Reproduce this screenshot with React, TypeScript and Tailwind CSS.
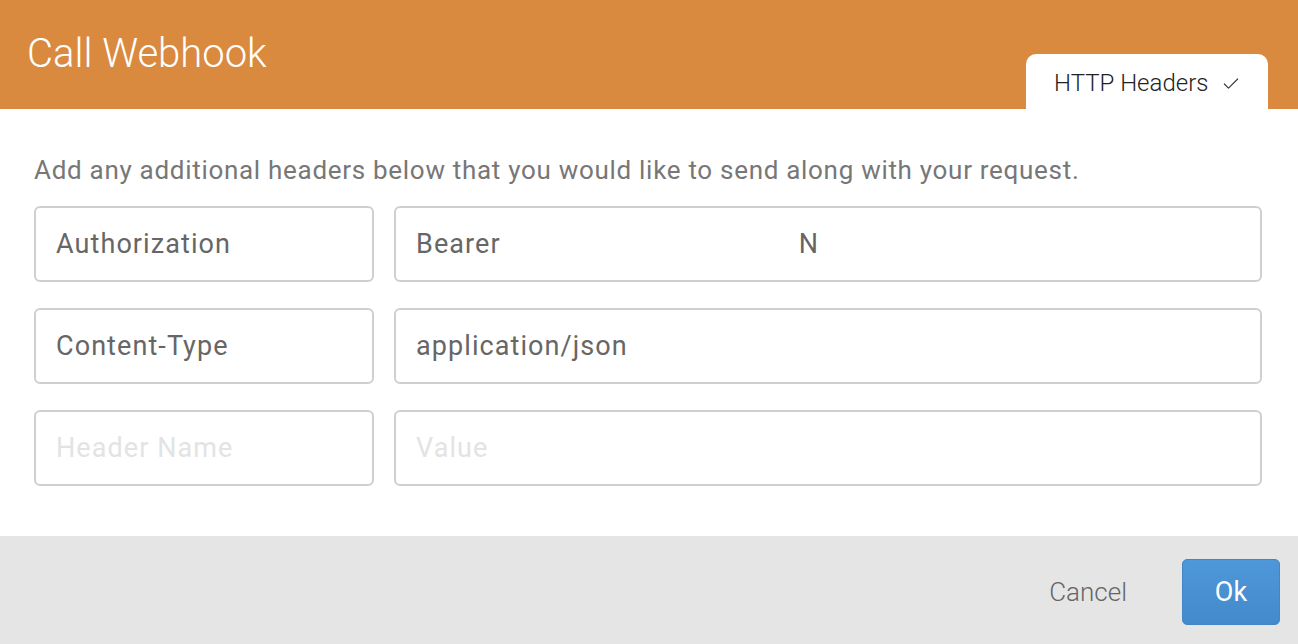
import { Check } from "lucide-react";

const font = { fontFamily: "Roboto, 'Liberation Sans', sans-serif" };

const Field = ({
  value,
  placeholder,
  className,
  children,
}: {
  value?: string;
  placeholder?: string;
  className?: string;
  children?: React.ReactNode;
}) => (
  <div
    className={`h-[76px] rounded-[6px] border-2 border-[#cfcfcf] bg-white px-[20px] flex items-center text-[27px] tracking-[0.04em] ${
      value || children ? "text-[#666]" : "text-[#e3e3e3]"
    } ${className ?? ""}`}
  >
    {children ?? value ?? placeholder}
  </div>
);

export default function App() {
  return (
    <div className="w-[1298px] h-[644px] flex flex-col bg-white" style={font}>
      <div className="h-[109px] bg-[#d98a3f] flex items-start justify-between pl-[27px] pr-[30px]">
        <div className="text-white text-[40px] font-light mt-[28px] leading-[52px]">
          Call Webhook
        </div>
        <div className="mt-[54px] h-[55px] w-[242px] bg-white rounded-t-[10px] flex items-center pl-[28px] gap-[13px] text-[#222] text-[24px] font-light pt-[3px]">
          <span>HTTP Headers</span>
          <Check size={20} strokeWidth={1.3} className="text-[#333] mt-[2px]" />
        </div>
      </div>
      <div className="flex-1 px-[34px] pt-[44px]">
        <div className="text-[26px] text-[#777] leading-[34px] tracking-[0.027em]">
          Add any additional headers below that you would like to send along with your request.
        </div>
        <div className="mt-[19px] flex flex-col gap-[26px] w-[1228px]">
          <div className="flex gap-[20px]">
            <Field value="Authorization" className="w-[340px]" />
            <Field className="flex-1">
              <span>Bearer</span>
              <span className="ml-[298px]">N</span>
            </Field>
          </div>
          <div className="flex gap-[20px]">
            <Field value="Content-Type" className="w-[340px]" />
            <Field value="application/json" className="flex-1" />
          </div>
          <div className="flex gap-[20px]">
            <Field placeholder="Header Name" className="w-[340px]" />
            <Field placeholder="Value" className="flex-1" />
          </div>
        </div>
      </div>
      <div className="h-[108px] bg-[#e5e5e5] flex items-center justify-end pr-[18px] gap-[55px]">
        <button className="text-[26px] text-[#666] font-light mt-[4px]">Cancel</button>
        <button className="w-[98px] h-[66px] rounded-[5px] bg-gradient-to-b from-[#4e97d8] to-[#438acb] border border-[#4386c6] text-white text-[27px] mt-[4px]">
          Ok
        </button>
      </div>
    </div>
  );
}
